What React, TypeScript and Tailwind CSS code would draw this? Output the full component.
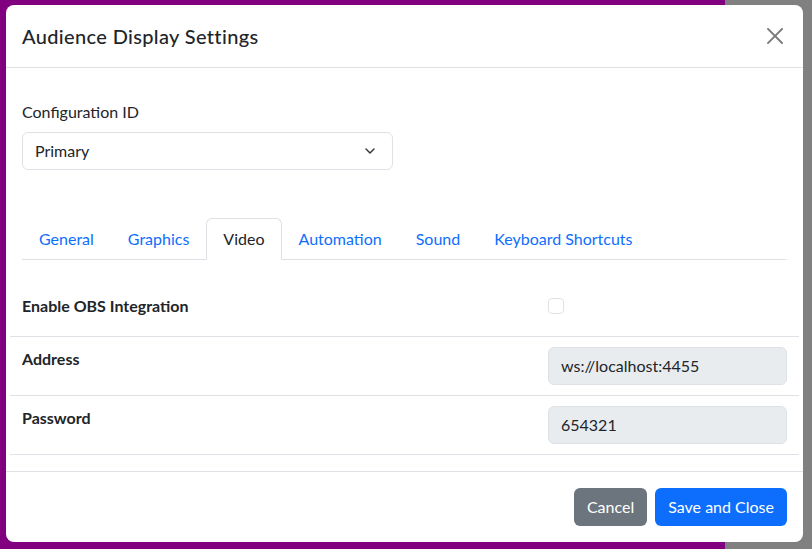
import { ChevronDown } from "lucide-react";

const tabs = ["General", "Graphics", "Video", "Automation", "Sound", "Keyboard Shortcuts"];

function CloseIcon() {
  return (
    <svg width="16" height="16" viewBox="0 0 16 16" className="text-[#7a7a7a]">
      <path d="M1 1 L15 15 M15 1 L1 15" stroke="currentColor" strokeWidth="1.9" strokeLinecap="square" />
    </svg>
  );
}

export default function App() {
  return (
    <div className="h-[549px] w-[812px] bg-[linear-gradient(to_right,#800080_725px,#808080_725px)] pl-[6px] pt-[5px] font-['Lato',sans-serif] text-[#212529]">
      <div className="flex h-[537px] w-[797px] flex-col rounded-lg bg-white">
        {/* header */}
        <div className="flex h-[63px] items-center justify-between border-b border-[#dee2e6] px-4">
          <h5 className="text-[20px] font-medium leading-[30px] tracking-[0.35px]">Audience Display Settings</h5>
          <button className="flex h-6 w-6 items-center justify-center">
            <CloseIcon />
          </button>
        </div>

        {/* body */}
        <div className="h-[403px] px-4 pt-8">
          <label className="mb-2 block text-base leading-6">Configuration ID</label>
          <div className="flex h-[38px] w-[371px] items-center justify-between rounded-md border border-[#dee2e6] pl-3 pr-[14px] text-base">
            <span>Primary</span>
            <ChevronDown size={16} strokeWidth={2.2} className="text-[#343a40]" />
          </div>

          <div className="mt-12 flex border-b border-[#dee2e6] text-base leading-6">
            {tabs.map((t) =>
              t === "Video" ? (
                <div key={t} className="-mb-px rounded-t-md border border-[#dee2e6] border-b-white bg-white px-4 py-2 text-[#212529]">
                  {t}
                </div>
              ) : (
                <div key={t} className="-mb-px border border-transparent px-4 py-2 text-[#0d6efd]">
                  {t}
                </div>
              )
            )}
          </div>

          <div className="-mx-3">
            <div className="grid grid-cols-12 border-b border-[#dee2e6] pb-[18px] pt-[34px]">
              <div className="col-span-8 px-3 font-bold leading-6">Enable OBS Integration</div>
              <div className="col-span-4 px-3">
                <div className="mt-1 h-4 w-4 rounded-[4px] border border-[#dee2e6] bg-white" />
              </div>
            </div>
            <div className="grid grid-cols-12 border-b border-[#dee2e6] py-[10px]">
              <div className="col-span-8 px-3 font-bold leading-6">Address</div>
              <div className="col-span-4 px-3">
                <div className="flex h-[38px] items-center rounded-md border border-[#dee2e6] bg-[#e9ecef] px-3">
                  ws://localhost:4455
                </div>
              </div>
            </div>
            <div className="grid grid-cols-12 border-b border-[#dee2e6] py-[10px]">
              <div className="col-span-8 px-3 font-bold leading-6">Password</div>
              <div className="col-span-4 px-3">
                <div className="flex h-[38px] items-center rounded-md border border-[#dee2e6] bg-[#e9ecef] px-3">
                  654321
                </div>
              </div>
            </div>
          </div>
        </div>

        {/* footer */}
        <div className="flex flex-1 items-center justify-end gap-2 border-t border-[#dee2e6] px-4">
          <button className="h-[38px] rounded-md bg-[#6c757d] px-[13px] text-base text-white">Cancel</button>
          <button className="h-[38px] rounded-md bg-[#0d6efd] px-[13px] text-base text-white">Save and Close</button>
        </div>
      </div>
    </div>
  );
}
